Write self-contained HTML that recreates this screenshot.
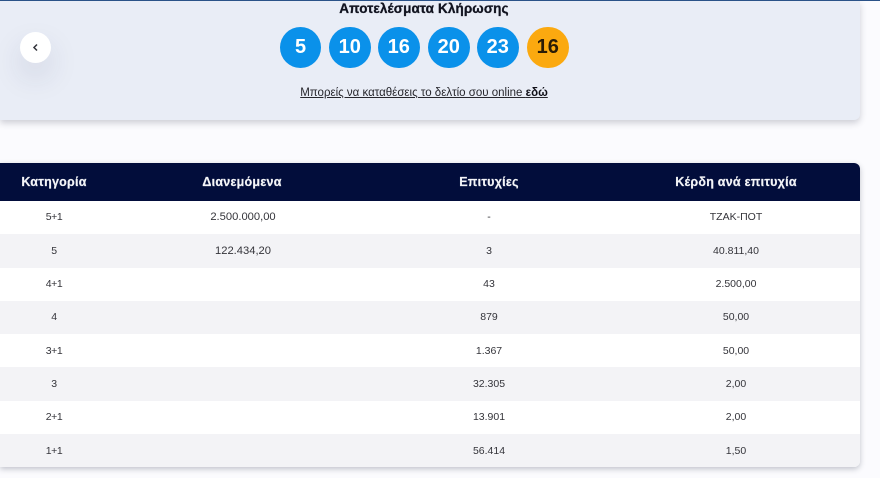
<!DOCTYPE html>
<html lang="el">
<head>
<meta charset="utf-8">
<style>
html,body{margin:0;padding:0}
body{width:880px;height:478px;overflow:hidden;position:relative;background:#fbfbfe;font-family:"Liberation Sans",sans-serif;color:#2f2f33}
.abs{position:absolute}
.topline{left:0;top:0;width:880px;height:1px;background:#2a5288}
.panel{left:0;top:1px;width:860px;height:119px;background:#e9edf6;border-radius:0 0 6px 0;box-shadow:0 3px 7px rgba(40,45,70,.22)}
.back{left:20px;top:32px;width:31px;height:31px;border-radius:50%;background:#fff;box-shadow:0 14px 30px rgba(40,50,90,.13)}
.title{left:274px;width:300px;top:0;text-align:center;font-size:13.5px;line-height:17px;font-weight:700;color:#11131f;letter-spacing:.12px;-webkit-text-stroke:.3px #11131f}
.ball{top:26.75px;width:41.5px;height:41.5px;border-radius:50%;background:#0a91ea;color:#fff;font-size:20px;font-weight:700;line-height:41px;text-align:center}
.ball.y{background:#fba90f;color:#2b1c05}
.link{left:274px;width:300px;top:86px;text-align:center;font-size:11.5px;line-height:15px;color:#26262c;text-decoration:underline}
.table{left:0;top:163px;width:860px;height:304px;border-radius:0 6px 6px 0;box-shadow:0 2px 6px rgba(40,45,70,.28);background:#fff}
.head{left:0;top:0;width:860px;height:38px;background:#020d3b;border-radius:0 6px 0 0;overflow:hidden}
.c{position:absolute;text-align:center;transform:translateX(-50%);white-space:nowrap}
.head .c{top:0;line-height:38px;color:#f4f5f8;font-size:12.5px;font-weight:700;letter-spacing:.25px;-webkit-text-stroke:.2px #f4f5f8}
.row{position:absolute;left:0;width:860px;height:33.25px;background:#fff}
.row.g{background:#f3f3f6}
.row .c{top:0;line-height:34px;font-size:10.5px;color:#34343a}
.row.u .c{line-height:32px}
.row .c1{letter-spacing:-.4px}
.row .c2{font-size:11.2px;left:243px}
.row:last-child{border-radius:0 0 6px 0}
.c1{left:54px}.c2{left:242px}.c3{left:489px}.c4{left:736px}
</style>
</head>
<body>
<div class="abs panel"></div>
<div class="abs topline"></div>
<div class="abs back">
<svg width="31" height="31" viewBox="0 0 31 31" style="display:block"><path d="M17 12.5L14 15.5L17 18.5" fill="none" stroke="#33343c" stroke-width="1.5"/></svg>
</div>
<div class="abs title">Αποτελέσματα Κλήρωσης</div>
<div class="abs ball" style="left:279.75px">5</div>
<div class="abs ball" style="left:329px">10</div>
<div class="abs ball" style="left:378px">16</div>
<div class="abs ball" style="left:428px">20</div>
<div class="abs ball" style="left:477px">23</div>
<div class="abs ball y" style="left:527px">16</div>
<div class="abs link">Μπορείς να καταθέσεις το δελτίο σου online <b style="color:#101018">εδώ</b></div>

<div class="abs table">
<div class="abs head">
<span class="c c1">Κατηγορία</span><span class="c c2">Διανεμόμενα</span><span class="c c3">Επιτυχίες</span><span class="c c4">Κέρδη ανά επιτυχία</span>
</div>
<div class="abs" style="left:0;top:38px;width:860px;height:266px">
<div class="row u" style="top:0"><span class="c c1">5+1</span><span class="c c2">2.500.000,00</span><span class="c c3">-</span><span class="c c4">ΤΖΑΚ-ΠΟΤ</span></div>
<div class="row g" style="top:33.25px"><span class="c c1">5</span><span class="c c2">122.434,20</span><span class="c c3">3</span><span class="c c4">40.811,40</span></div>
<div class="row u" style="top:66.5px"><span class="c c1">4+1</span><span class="c c3">43</span><span class="c c4">2.500,00</span></div>
<div class="row g u" style="top:99.75px"><span class="c c1">4</span><span class="c c3">879</span><span class="c c4">50,00</span></div>
<div class="row" style="top:133px"><span class="c c1">3+1</span><span class="c c3">1.367</span><span class="c c4">50,00</span></div>
<div class="row g" style="top:166.25px"><span class="c c1">3</span><span class="c c3">32.305</span><span class="c c4">2,00</span></div>
<div class="row u" style="top:199.5px"><span class="c c1">2+1</span><span class="c c3">13.901</span><span class="c c4">2,00</span></div>
<div class="row g" style="top:232.75px"><span class="c c1">1+1</span><span class="c c3">56.414</span><span class="c c4">1,50</span></div>
</div>
</div>
</body>
</html>
